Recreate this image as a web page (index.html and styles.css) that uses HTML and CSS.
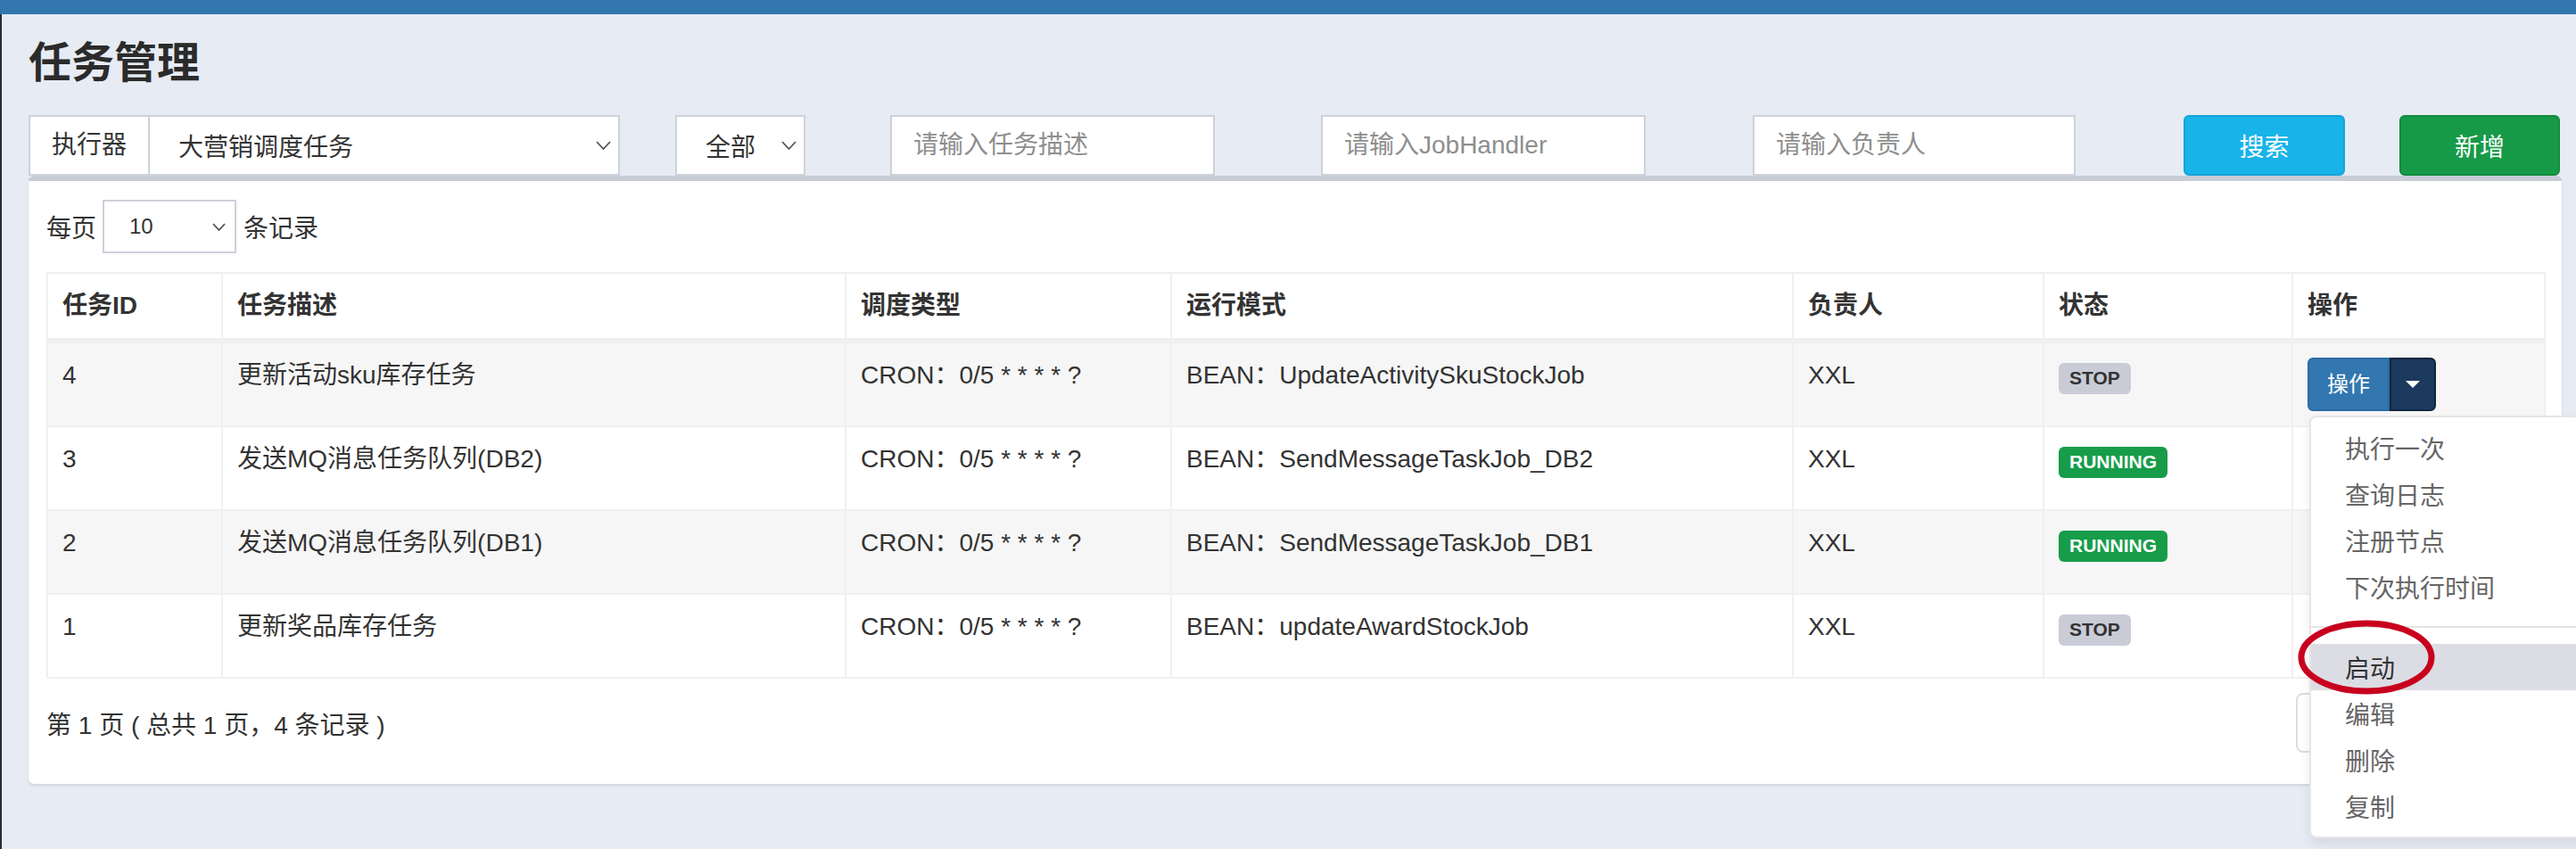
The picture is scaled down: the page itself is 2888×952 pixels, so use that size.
FILE: index.html
```html
<!DOCTYPE html>
<html lang="zh-CN">
<head>
<meta charset="utf-8">
<title>任务管理</title>
<link rel="stylesheet" href="styles.css">
</head>
<body>
<div class="topbar"></div>
<div class="main">
  <h1 class="title">任务管理</h1>
  <div class="filters">
    <div class="exec-group">
      <span class="addon">执行器</span>
      <div class="select sel-exec"><span>大营销调度任务</span><svg class="chev" width="17" height="10" viewBox="0 0 17 10"><polyline points="1,1 8.5,9 16,1"/></svg></div>
    </div>
    <div class="select sel-status"><span>全部</span><svg class="chev" width="17" height="10" viewBox="0 0 17 10"><polyline points="1,1 8.5,9 16,1"/></svg></div>
    <input class="form-input in1" type="text" placeholder="请输入任务描述">
    <input class="form-input in2" type="text" placeholder="请输入JobHandler">
    <input class="form-input in3" type="text" placeholder="请输入负责人">
    <button class="btn btn-search">搜索</button>
    <button class="btn btn-add">新增</button>
  </div>

  <div class="box">
    <div class="length-row">
      <span>每页</span>
      <div class="select sel-len"><span>10</span><svg class="chev" width="15" height="9" viewBox="0 0 15 9"><polyline points="1,1 7.5,8 14,1"/></svg></div>
      <span>条记录</span>
    </div>

    <table class="grid">
      <colgroup>
        <col class="c1"><col class="c2"><col class="c3"><col class="c4"><col class="c5"><col class="c6"><col class="c7">
      </colgroup>
      <thead>
        <tr><th>任务ID</th><th>任务描述</th><th>调度类型</th><th>运行模式</th><th>负责人</th><th>状态</th><th>操作</th></tr>
      </thead>
      <tbody>
        <tr>
          <td>4</td><td>更新活动sku库存任务</td><td>CRON：0/5 * * * * ?</td><td>BEAN：UpdateActivitySkuStockJob</td><td>XXL</td>
          <td><span class="label label-stop">STOP</span></td>
          <td>
            <div class="btn-group">
              <span class="op-main">操作</span>
              <span class="op-caret"><i class="caret"></i></span>
              <ul class="menu">
                <li>执行一次</li>
                <li>查询日志</li>
                <li>注册节点</li>
                <li>下次执行时间</li>
                <li class="divider"></li>
                <li class="active">启动<svg class="mark" width="156" height="86" viewBox="0 0 156 86"><ellipse cx="78" cy="43" rx="73" ry="38"/></svg></li>
                <li>编辑</li>
                <li>删除</li>
                <li>复制</li>
              </ul>
            </div>
          </td>
        </tr>
        <tr>
          <td>3</td><td>发送MQ消息任务队列(DB2)</td><td>CRON：0/5 * * * * ?</td><td>BEAN：SendMessageTaskJob_DB2</td><td>XXL</td>
          <td><span class="label label-run">RUNNING</span></td>
          <td><div class="op-spacer"></div></td>
        </tr>
        <tr>
          <td>2</td><td>发送MQ消息任务队列(DB1)</td><td>CRON：0/5 * * * * ?</td><td>BEAN：SendMessageTaskJob_DB1</td><td>XXL</td>
          <td><span class="label label-run">RUNNING</span></td>
          <td><div class="op-spacer"></div></td>
        </tr>
        <tr>
          <td>1</td><td>更新奖品库存任务</td><td>CRON：0/5 * * * * ?</td><td>BEAN：updateAwardStockJob</td><td>XXL</td>
          <td><span class="label label-stop">STOP</span></td>
          <td><div class="op-spacer"></div></td>
        </tr>
      </tbody>
    </table>

    <div class="footer">
      <span>第 1 页 ( 总共 1 页，4 条记录 )</span>
      <div class="pager"><span class="pg pg-prev"></span><span class="pg pg-next"></span></div>
    </div>
  </div>
</div>
</body>
</html>
```

FILE: styles.css
```css
html, body {
  margin: 0;
  padding: 0;
}
body {
  width: 2888px;
  height: 952px;
  overflow: hidden;
  background: #e7ebf3;
  font-family: "Liberation Sans", "Noto Sans CJK SC", sans-serif;
  font-size: 28px;
  color: #333;
}
.topbar {
  height: 16px;
  background: #3277b0;
}
.main {
  border-left: 2px solid #222d32;
  padding: 0 16px 0 30px;
  min-height: 936px;
  box-sizing: border-box;
}
.title {
  margin: 0;
  padding-top: 28px;
  font-size: 48px;
  line-height: 53px;
  font-weight: 600;
  color: #2b2b2b;
}

/* filters */
.filters {
  display: flex;
  align-items: stretch;
  height: 68px;
  margin-top: 32px;
}
.exec-group {
  display: flex;
  width: 663px;
}
.addon {
  width: 134px;
  box-sizing: border-box;
  border: 2px solid #cdd1da;
  border-right: 0;
  background: #fff;
  padding-left: 24px;
  line-height: 64px;
  color: #333;
}
.select {
  display: flex;
  align-items: center;
  justify-content: space-between;
  box-sizing: border-box;
  border: 2px solid #cdd1da;
  background: #fff;
  color: #333;
  padding: 0 8px 0 32px;
}
.sel-exec { flex: 1; }
.sel-status { width: 146px; margin-left: 62px; }
.chev polyline {
  fill: none;
  stroke: #555;
  stroke-width: 1.8;
}
.form-input {
  box-sizing: border-box;
  height: 68px;
  border: 2px solid #cdd1da;
  border-radius: 0;
  background: #fff;
  padding: 0 24px;
  font-family: "Liberation Sans", "Noto Sans CJK SC", sans-serif;
  font-size: 28px;
  color: #555;
  outline: none;
}
.form-input::placeholder { color: #8e8e8e; }
.in1 { width: 364px; margin-left: 95px; }
.in2 { width: 364px; margin-left: 119px; }
.in3 { width: 362px; margin-left: 120px; }
.btn {
  box-sizing: border-box;
  height: 68px;
  border-radius: 6px;
  border: 2px solid transparent;
  color: #fff;
  font-family: "Liberation Sans", "Noto Sans CJK SC", sans-serif;
  font-size: 28px;
  padding: 0;
}
.btn-search {
  width: 181px;
  margin-left: 121px;
  background: #18b3e9;
  border-color: #14a4d8;
}
.btn-add {
  width: 180px;
  margin-left: 61px;
  background: #179a48;
  border-color: #128a3d;
}

/* box */
.box {
  background: #fff;
  border-top: 6px solid #c8ccd7;
  border-radius: 6px;
  box-shadow: 0 2px 3px rgba(0, 0, 0, 0.1);
  padding: 20px 20px 35px;
}
.length-row {
  display: flex;
  align-items: center;
  height: 60px;
  margin-top: 1px;
}
.sel-len {
  width: 150px;
  height: 60px;
  margin: 0 8px 0 7px;
  font-size: 24px;
  padding: 0 10px 0 28px;
  color: #333;
}

/* table */
.grid {
  width: 2800px;
  table-layout: fixed;
  border-collapse: collapse;
  margin-top: 21px;
  border: 2px solid #f0f0f0;
}
.c1 { width: 196px; }
.c2 { width: 699px; }
.c3 { width: 365px; }
.c4 { width: 697px; }
.c5 { width: 281px; }
.c6 { width: 279px; }
.c7 { width: 283px; }
.grid th, .grid td {
  border: 2px solid #f0f0f0;
  padding: 16px;
  line-height: 40px;
  text-align: left;
  vertical-align: top;
  white-space: nowrap;
}
.grid th {
  font-weight: 700;
  vertical-align: bottom;
  border-bottom-width: 6px;
}
.grid tbody tr:nth-child(odd) { background: #f6f6f6; }

.label {
  display: inline-block;
  margin-top: 6px;
  font-size: 21px;
  line-height: 22px;
  font-weight: 700;
  padding: 6px 12px 7px;
  border-radius: 6px;
}
.label-stop { background: #c9ccd7; color: #333; }
.label-run { background: #179c4a; color: #fff; }

.op-spacer { height: 60px; }
.btn-group {
  position: relative;
  display: inline-flex;
  height: 60px;
  vertical-align: top;
}
.op-main {
  box-sizing: border-box;
  height: 60px;
  padding: 0 20px;
  line-height: 56px;
  font-size: 24px;
  color: #fff;
  background: #3277b0;
  border: 2px solid #2d6ca3;
  border-radius: 6px 0 0 6px;
}
.op-caret {
  box-sizing: border-box;
  width: 52px;
  height: 60px;
  display: flex;
  align-items: center;
  justify-content: center;
  background: #1b3a5e;
  border: 2px solid #10263f;
  border-radius: 0 6px 6px 0;
}
.caret {
  width: 0;
  height: 0;
  border-top: 8px solid #fff;
  border-left: 8px solid transparent;
  border-right: 8px solid transparent;
}
.menu {
  position: absolute;
  top: 65px;
  left: 2px;
  z-index: 10;
  min-width: 360px;
  margin: 0;
  padding: 8px 0;
  list-style: none;
  background: #fff;
  border: 2px solid #e6e6e6;
  border-radius: 8px;
  box-shadow: 0 6px 12px rgba(0, 0, 0, 0.08);
}
.menu li {
  position: relative;
  padding: 6px 38px 0;
  line-height: 46px;
  font-size: 28px;
  color: #666;
  white-space: nowrap;
}
.menu li.divider {
  height: 2px;
  padding: 0;
  margin: 18px 0;
  background: #e5e5e5;
}
.menu li.active {
  background: #dcdde4;
  color: #333;
}
.mark {
  position: absolute;
  left: -16px;
  top: -28px;
}
.mark ellipse {
  fill: none;
  stroke: #c8001e;
  stroke-width: 7;
}

/* footer */
.footer {
  display: flex;
  justify-content: space-between;
  align-items: center;
  margin-top: 16px;
}
.pager {
  display: flex;
  height: 67px;
}
.pg {
  box-sizing: border-box;
  width: 140px;
  height: 67px;
  border: 2px solid #ddd;
}
.pg-prev { border-radius: 8px 0 0 8px; }
.pg-next { border-radius: 0 8px 8px 0; margin-left: -2px; }
```
